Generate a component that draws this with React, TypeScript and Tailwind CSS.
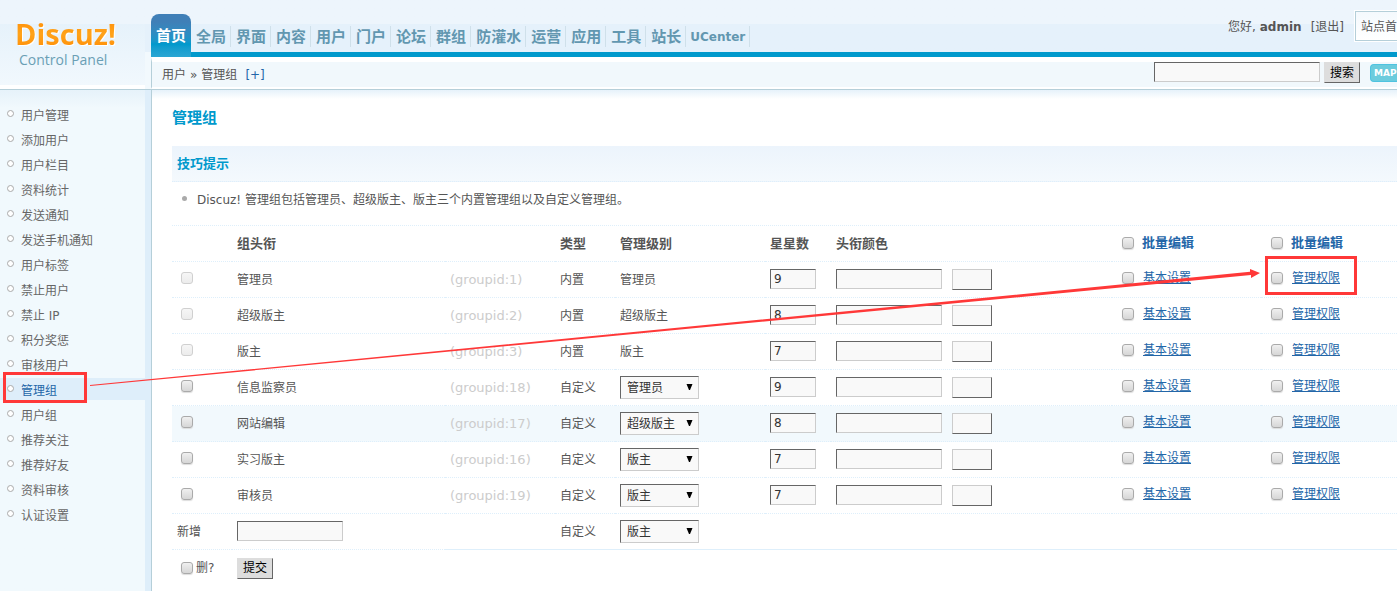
import type { ReactNode } from "react";

const tabs = ["全局", "界面", "内容", "用户", "门户", "论坛", "群组", "防灌水", "运营", "应用", "工具", "站长"];

const menu = [
  "用户管理", "添加用户", "用户栏目", "资料统计", "发送通知", "发送手机通知", "用户标签", "禁止用户", "禁止 IP",
  "积分奖惩", "审核用户", "管理组", "用户组", "推荐关注", "推荐好友", "资料审核", "认证设置",
];

type Group = { id: number; name: string; level: string; stars: number; builtIn: boolean };

const groups: Group[] = [
  { id: 1, name: "管理员", level: "管理员", stars: 9, builtIn: true },
  { id: 2, name: "超级版主", level: "超级版主", stars: 8, builtIn: true },
  { id: 3, name: "版主", level: "版主", stars: 7, builtIn: true },
  { id: 18, name: "信息监察员", level: "管理员", stars: 9, builtIn: false },
  { id: 17, name: "网站编辑", level: "超级版主", stars: 8, builtIn: false },
  { id: 16, name: "实习版主", level: "版主", stars: 7, builtIn: false },
  { id: 19, name: "审核员", level: "版主", stars: 7, builtIn: false },
];

const sunken = "border border-t-[#666] border-l-[#666] border-r-[#ccc] border-b-[#ccc] bg-[#f9f9f9] text-[#333]";
const cell = "h-9 border-b border-dotted border-[#deeffb] px-[5px] text-left align-middle";
const box =
  "size-3 shrink-0 appearance-none rounded-[3px] border border-[#aaa] bg-linear-to-b from-[#f0f0f0] to-[#d6d6d6] shadow-[0_1px_1px_#ddd] checked:bg-[#2366a8] disabled:border-[#d0d0d0] disabled:from-[#f6f6f6] disabled:to-[#ececec] disabled:shadow-none";

function LevelSelect({ value, label }: { value: string; label: string }) {
  return (
    <span className="relative block w-[79px]">
      <select aria-label={label} defaultValue={value} className={`block h-[23px] w-full appearance-none pl-[6px] leading-5 ${sunken}`}>
        <option>管理员</option>
        <option>超级版主</option>
        <option>版主</option>
      </select>
      <svg viewBox="0 0 7 6" className="pointer-events-none absolute top-[8px] right-[6px] h-[6px] w-[7px]" aria-hidden="true">
        <path d="M0.5 0H6.5L4 6H3Z" fill="#000" />
      </svg>
    </span>
  );
}

function CheckAll({ label }: { label: string }) {
  return (
    <label className="flex items-center gap-2 pb-[2px] pl-[5px] font-bold text-[#2366a8]">
      <input type="checkbox" className={box} aria-label={label} />
      批量编辑
    </label>
  );
}

function CheckLink({ label, children }: { label: string; children: ReactNode }) {
  return (
    <div className="flex items-center gap-[9px] pb-[3px] pl-[5px]">
      <input type="checkbox" aria-label={label} className={box} />
      <a href="#" className="text-[#2366a8] underline">{children}</a>
    </div>
  );
}

function Header() {
  return (
    <header className="flex border-b border-[#b5cfd9] bg-linear-to-b from-[#eff5fc] to-[#ebf4fc]">
      <div className="flex w-[145px] shrink-0 flex-col border-b-4 border-white bg-linear-to-b from-[#edf5fc] from-28% via-[#e6f2fb] via-28% to-[#f1f8fd] pt-4 pl-[15px]">
        <span className="bg-linear-to-b from-[#ff8a00] via-[#ffa31a] to-[#ff8a00] bg-clip-text font-['Open_Sans'] text-[29px] leading-9 font-bold text-transparent drop-shadow-[1px_1px_0_#fff]">
          Discuz!
        </span>
        <span className="pl-1 font-['Open_Sans'] text-[14px] leading-4 text-[#6a9fb5]">Control Panel</span>
      </div>
      <div className="flex w-[6px] shrink-0 flex-col">
        <div className="h-6 bg-[#edf5fc]" />
        <div className="h-7 bg-[#e5f1fb]" />
        <div className="flex-1 bg-[#f2f9fd]" />
      </div>
      <div className="flex min-w-0 flex-1 flex-col">
        <div className="flex h-[57px] border-b-[5px] border-[#09c] bg-linear-to-b from-[#edf5fc] from-46% to-[#e5f1fb] to-46%">
          <nav className="flex h-[57px] pt-[14px] text-[15px] font-bold text-[#6297b0]">
            <a href="#" className="flex h-[43px] items-center rounded-t-lg bg-linear-to-b from-[#3f7fb7] from-18% via-[#09c] via-70% to-[#2aa6d3] px-[5px] text-white">
              首页
            </a>
            {tabs.map((t) => (
              <a key={t} href="#" className="mt-3 mb-[10px] flex items-center border-r border-[#cfe0ea] pr-1 pl-[5px] leading-5">
                {t}
              </a>
            ))}
            <a href="#" className="mt-3 mb-[10px] flex items-center border-r border-[#cfe0ea] px-[4px] text-xs leading-5">UCenter</a>
          </nav>
          <div className="ml-auto flex items-start pt-[10px]">
            <p className="flex items-center gap-1 pt-[8px] leading-[18px]">
              <span>您好,</span>
              <strong>admin</strong>
              <a href="#" className="pl-[5px]">[退出]</a>
            </p>
            <a href="#" className="ml-[10px] w-[43px] overflow-hidden border border-r-0 border-white">
              <span className="block h-[30px] border border-r-0 border-[#b5cfd9] bg-linear-to-b from-[#f4f9fd] to-white pl-[5px] leading-[30px] whitespace-nowrap">
                站点首
              </span>
            </a>
          </div>
        </div>
        <div className="flex h-8 items-start border-y border-l border-t-[5px] border-b-2 border-white border-l-[#b5cfd9] bg-[#f1f8fc]">
          <div className="flex items-center gap-1 pl-[10px] leading-[26px]">
            <span>用户</span>
            <span>»</span>
            <span>管理组</span>
            <a href="#" className="pl-1 text-[#2366a8]">[+]</a>
          </div>
          <form className="ml-auto flex items-start" onSubmit={(e) => e.preventDefault()}>
            <input aria-label="搜索" type="text" className={`h-5 w-[166px] px-1 ${sunken}`} />
            <button className="ml-1 h-[21px] w-9 border border-t-[#ddd] border-r-[#666] border-b-[#666] border-l-[#ddd] bg-[#ddd] leading-[18px] text-black">
              搜索
            </button>
            <a href="#" className="mt-[2px] ml-[10px] h-[18px] w-[27px] rounded-l border border-r-0 border-[#4fc3e0] bg-[#6cccdd] pl-[3px] text-[9px] leading-4 font-bold text-white">
              MAP
            </a>
          </form>
        </div>
      </div>
    </header>
  );
}

function Sidebar() {
  return (
    <aside className="w-[152px] shrink-0 border-r border-[#b5cfd9] bg-[#deeefa]">
      <ul className="mr-[6px] flex min-h-full flex-col gap-[3px] bg-linear-to-b from-[#e6f2fa] to-[#f1f9fd] to-[18px] pt-[13px]">
        {menu.map((m) => {
          const active = m === "管理组";
          return (
            <li key={m}>
              <a href="#" className={active ? "flex h-[22px] items-center bg-[#deeefa] pl-[7px] text-[#2366a8]" : "flex h-[22px] items-center pl-[7px] text-[#666]"}>
                <span className="mb-px size-[7px] rounded-full border border-[#aaa] bg-white" />
                <span className="pt-[3px] pl-[7px]">{m}</span>
              </a>
            </li>
          );
        })}
      </ul>
    </aside>
  );
}

function GroupRow({ g }: { g: Group }) {
  return (
    <tr className={g.id === 17 ? "bg-[#f2f9fd]" : ""}>
      <td className={cell}>
        <input type="checkbox" disabled={g.builtIn} aria-label={`删除 ${g.name}`} className={`mb-[3px] ml-1 block ${box}`} />
      </td>
      <td className={cell}>{g.name}</td>
      <td className={`${cell} text-[13px] text-[#ccc]`}>(groupid:{g.id})</td>
      <td className={cell}>{g.builtIn ? "内置" : "自定义"}</td>
      <td className={cell}>{g.builtIn ? g.level : <LevelSelect value={g.level} label={`${g.name} 管理级别`} />}</td>
      <td className={cell}>
        <input aria-label={`${g.name} 星星数`} defaultValue={g.stars} className={`mb-px block h-5 w-[46px] px-[3px] ${sunken}`} />
      </td>
      <td className={cell}>
        <div className="flex items-start gap-[10px]">
          <input aria-label={`${g.name} 头衔颜色`} className={`h-5 w-[106px] px-[3px] ${sunken}`} />
          <button aria-label={`${g.name} 选择颜色`} className="h-[21px] w-10 border border-t-[#ccc] border-r-[#666] border-b-[#666] border-l-[#ccc] bg-[#f9f9f9]" />
        </div>
      </td>
      <td className={cell}>
        <CheckLink label={`${g.name} 基本设置`}>基本设置</CheckLink>
      </td>
      <td className={cell}>
        <CheckLink label={`${g.name} 管理权限`}>管理权限</CheckLink>
      </td>
    </tr>
  );
}

function Annotations() {
  return (
    <svg className="pointer-events-none absolute top-0 left-0" width="1397" height="591" aria-hidden="true">
      <g fill="none" stroke="#ff3838" strokeWidth="3">
        <rect x="4.5" y="373.5" width="81" height="28" />
        <rect x="1266.5" y="257.5" width="89" height="36" />
      </g>
      <path d="M90 385L1250 271.8V269L1260 273L1251 278V275L90 386Z" fill="#ff3838" />
    </svg>
  );
}

export default function App() {
  return (
    <div className="relative flex min-h-screen flex-col overflow-hidden bg-white font-['DejaVu_Sans','Noto_Sans_CJK_SC',sans-serif] text-xs leading-4 text-[#555]">
      <Header />
      <div className="flex flex-1">
        <Sidebar />
        <main className="min-w-0 flex-1 bg-linear-to-b from-[#e6f2fa] to-white to-[9px] pt-[18px] pl-5">
          <h1 className="text-[15px] leading-5 font-bold text-[#09c]">管理组</h1>
          <section className="mt-[18px]">
            <h2 className="h-9 border-b border-dotted border-[#deeffb] bg-linear-to-b from-[#ecf4fc] to-[#f4f9fd] pl-[5px] text-[13px] leading-9 font-bold text-[#09c]">
              技巧提示
            </h2>
            <ul className="h-11 border-b border-dotted border-[#deeffb] pt-[10px] pl-[10px]">
              <li className="flex items-center gap-[10px]">
                <span className="mb-1 size-[5px] rounded-full bg-[#aaa]" />
                Discuz! 管理组包括管理员、超级版主、版主三个内置管理组以及自定义管理组。
              </li>
            </ul>
          </section>
          <table className="w-full table-fixed border-separate border-spacing-0">
            <colgroup>
              <col className="w-[60px]" />
              <col className="w-[213px]" />
              <col className="w-[110px]" />
              <col className="w-[60px]" />
              <col className="w-[150px]" />
              <col className="w-[66px]" />
              <col className="w-[281px]" />
              <col className="w-[149px]" />
              <col />
            </colgroup>
            <thead className="text-[13px]">
              <tr>
                <th className={cell} />
                <th className={cell}>组头衔</th>
                <th className={cell} />
                <th className={cell}>类型</th>
                <th className={cell}>管理级别</th>
                <th className={cell}>星星数</th>
                <th className={cell}>头衔颜色</th>
                <th className={cell}><CheckAll label="批量编辑 基本设置" /></th>
                <th className={cell}><CheckAll label="批量编辑 管理权限" /></th>
              </tr>
            </thead>
            <tbody>
              {groups.map((g) => (
                <GroupRow key={g.id} g={g} />
              ))}
              <tr>
                <td className={cell}>新增</td>
                <td className={cell}>
                  <input aria-label="新增组头衔" className={`mb-px block h-5 w-[106px] px-[3px] ${sunken}`} />
                </td>
                <td className="border-b border-[#deeffb]" />
                <td className="border-b border-[#deeffb] px-[5px]">自定义</td>
                <td className="border-b border-[#deeffb] px-[5px]">
                  <LevelSelect value="版主" label="新增 管理级别" />
                </td>
                <td colSpan={4} className="border-b border-[#deeffb]" />
              </tr>
              <tr>
                <td className="h-9 px-[5px]">
                  <label className="ml-1 flex items-center gap-[3px] whitespace-nowrap">
                    <input type="checkbox" className={box} />
                    删?
                  </label>
                </td>
                <td colSpan={8} className="px-[5px]">
                  <button className="block h-[21px] w-9 border border-t-[#ddd] border-r-[#666] border-b-[#666] border-l-[#ddd] bg-[#ddd] leading-[18px] text-black">
                    提交
                  </button>
                </td>
              </tr>
            </tbody>
          </table>
        </main>
      </div>
      <Annotations />
    </div>
  );
}
